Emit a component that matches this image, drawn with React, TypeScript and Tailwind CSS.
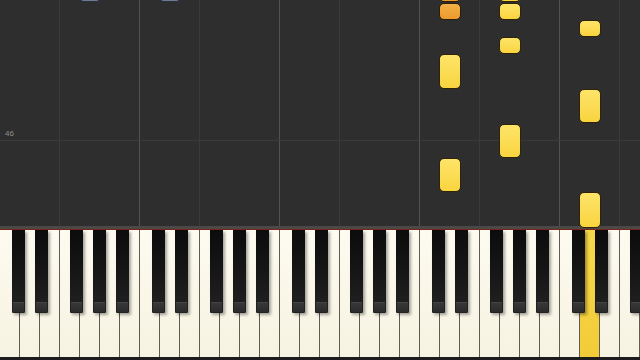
import React from 'react';

type Note = { lane: number; top: number; height: number; tone: 'yellow' | 'orange' | 'blue' };

// grid columns between E/F and B/C boundaries
const gridCols = [
  { w: 'w-[60px]', line: 'border-[#3a3a3a]' },
  { w: 'w-[80px]', line: 'border-[#525252]' },
  { w: 'w-[60px]', line: 'border-[#3a3a3a]' },
  { w: 'w-[80px]', line: 'border-[#525252]' },
  { w: 'w-[60px]', line: 'border-[#3a3a3a]' },
  { w: 'w-[80px]', line: 'border-[#525252]' },
  { w: 'w-[60px]', line: 'border-[#3a3a3a]' },
  { w: 'w-[80px]', line: 'border-[#525252]' },
  { w: 'w-[60px]', line: 'border-[#3a3a3a]' },
  { w: 'w-[20px]', line: 'border-transparent' },
];

const notes: Note[] = [
  { lane: 80, top: -20, height: 22, tone: 'blue' },
  { lane: 160, top: -20, height: 22, tone: 'blue' },
  { lane: 440, top: -20, height: 22, tone: 'orange' },
  { lane: 440, top: 3, height: 17, tone: 'orange' },
  { lane: 440, top: 54, height: 35, tone: 'yellow' },
  { lane: 440, top: 158, height: 34, tone: 'yellow' },
  { lane: 500, top: -20, height: 22, tone: 'yellow' },
  { lane: 500, top: 3, height: 17, tone: 'yellow' },
  { lane: 500, top: 37, height: 17, tone: 'yellow' },
  { lane: 500, top: 124, height: 34, tone: 'yellow' },
  { lane: 580, top: 20, height: 17, tone: 'yellow' },
  { lane: 580, top: 89, height: 34, tone: 'yellow' },
  { lane: 580, top: 192, height: 36, tone: 'yellow' },
];

const toneClass = {
  yellow: 'bg-gradient-to-b from-[#fde468] to-[#f9d43e] border-[#2e2306]',
  orange: 'bg-gradient-to-b from-[#f3b045] to-[#eb9a2e] border-[#2e1d06]',
  blue: 'bg-[#6b7b92] border-[#2a3040]',
};

const blackOffsets = [12, 35, 70, 93, 116];
const blackKeys: number[] = [];
for (let o = 0; o < 5; o++) {
  blackOffsets.forEach((off) => {
    const left = o * 140 + off;
    if (left < 640) blackKeys.push(left);
  });
}

const whiteKeys = Array.from({ length: 32 }, (_, i) => i);
const activeKey = 29;

export default function App() {
  return (
    <div className="w-[640px] h-[360px] overflow-hidden flex flex-col bg-[#202020]">
      {/* falling notes area */}
      <div className="relative h-[226px] bg-[#2e2e2e]">
        <div className="flex h-full">
          {gridCols.map((c, i) => (
            <div key={i} className={`${c.w} h-full border-r ${c.line}`} />
          ))}
        </div>
        <div className="absolute left-0 right-0 top-[140px] h-px bg-[#3a3a3a]" />
        <span className="absolute left-[5px] top-[130px] text-[8px] leading-none text-[#8f8f8f] font-['Liberation_Sans',sans-serif]">
          46
        </span>
        {notes.map((n, i) => (
          <div
            key={i}
            className={`absolute w-[22px] rounded-[5px] border ${toneClass[n.tone]}`}
            style={{ left: n.lane - 1, top: n.top, height: n.height }}
          />
        ))}
      </div>
      <div className="h-[3px] bg-[#4b4846]" />
      <div className="h-px bg-[#7a2420]" />

      {/* keyboard */}
      <div className="relative h-[127px] flex">
        {whiteKeys.map((i) => (
          <div
            key={i}
            className={`w-[20px] shrink-0 h-full border-r border-[#5f5c54] ${
              i === activeKey
                ? 'bg-gradient-to-b from-[#f7d84a] to-[#f2cc38]'
                : 'bg-gradient-to-b from-[#fdfbf0] to-[#f7f3e2]'
            }`}
          />
        ))}
        {blackKeys.map((left) => (
          <div
            key={left}
            className="absolute top-0 w-[13px] h-[83px] flex flex-col rounded-b-[1px] bg-gradient-to-b from-[#0c0c0c] via-[#161616] to-[#222] shadow-[2px_2px_3px_rgba(0,0,0,0.35)]"
            style={{ left }}
          >
            <div className="flex-1" />
            <div className="h-[10px] mx-px mb-px bg-gradient-to-b from-[#383838] to-[#2a2a2a] border-t border-[#444]" />
          </div>
        ))}
      </div>
      <div className="h-[3px] bg-[#1c1c1c]" />
    </div>
  );
}
